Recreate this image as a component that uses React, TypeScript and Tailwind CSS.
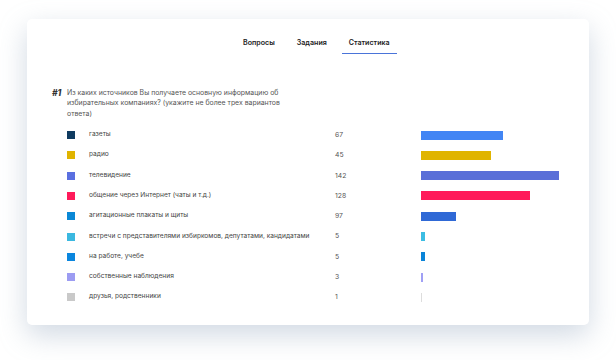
const rows = [
  { label: "газеты", value: 67, square: "bg-[#0f3b60]", bar: "bg-[#4285f4]", width: 82 },
  { label: "радио", value: 45, square: "bg-[#e0b400]", bar: "bg-[#e0b400]", width: 70 },
  { label: "телевидение", value: 142, square: "bg-[#5a6fe0]", bar: "bg-[#5a6fd8]", width: 138 },
  { label: "общение через Интернет (чаты и т.д.)", value: 128, square: "bg-[#ff1a5a]", bar: "bg-[#ff1a5a]", width: 109 },
  { label: "агитационные плакаты и щиты", value: 97, square: "bg-[#0a88d6]", bar: "bg-[#2f69d6]", width: 35 },
  { label: "встречи с представителями избиркомов, депутатами, кандидатами", value: 5, square: "bg-[#3bb8e0]", bar: "bg-[#3cbde3]", width: 4 },
  { label: "на работе, учебе", value: 5, square: "bg-[#0a86de]", bar: "bg-[#0a84d8]", width: 4 },
  { label: "собственные наблюдения", value: 3, square: "bg-[#9c9cf2]", bar: "bg-[#a0a0f5]", width: 2 },
  { label: "друзья, родственники", value: 1, square: "bg-[#c9c9c9]", bar: "bg-[#dddddd]", width: 1 },
];

const tabs = ["Вопросы", "Задания", "Статистика"];

export default function App() {
  return (
    <div
      className="w-[616px] h-[360px] bg-white pt-[19px] pl-[27px]"
      style={{ fontFamily: "Inter, 'Noto Sans', sans-serif" }}
    >
      <div className="w-[562px] h-[306px] rounded-[5px] bg-white shadow-[0_10px_28px_rgba(140,160,185,0.4)]">
        {/* tabs */}
        <div className="flex gap-[8px] pl-[209px] pt-[19px]">
          {tabs.map((t, i) => (
            <div
              key={t}
              className={
                i === 2
                  ? "px-[7px] h-[16px] text-[7.1px] font-semibold text-[#222] border-b-[1.5px] border-[#4a74d9] leading-[10px]"
                  : "px-[7px] h-[16px] text-[7.1px] font-semibold text-[#222] leading-[10px]"
              }
            >
              {t}
            </div>
          ))}
        </div>

        {/* question */}
        <div className="flex pl-[25px] pt-[34px]">
          <div className="w-[15px] text-[8.5px] font-extrabold italic text-[#333] leading-[10px]">#1</div>
          <div className="w-[222px] text-[6.9px] text-[#555] leading-[10.3px]">
            Из каких источников Вы получаете основную информацию об избирательных компаниях? (укажите не более трех вариантов ответа)
          </div>
        </div>

        {/* answers */}
        <div className="pl-[40px] pt-[6px]">
          {rows.map((r) => (
            <div key={r.label} className="flex items-center h-[20.3px]">
              <div className={`w-[8px] h-[8px] ${r.square}`} />
              <div className="w-[260px] pl-[14px] text-[6.6px] text-[#444]">{r.label}</div>
              <div className="w-[86px] text-[6.8px] text-[#555]">{r.value}</div>
              <div className={`h-[9px] ${r.bar}`} style={{ width: r.width }} />
            </div>
          ))}
        </div>
      </div>
    </div>
  );
}
